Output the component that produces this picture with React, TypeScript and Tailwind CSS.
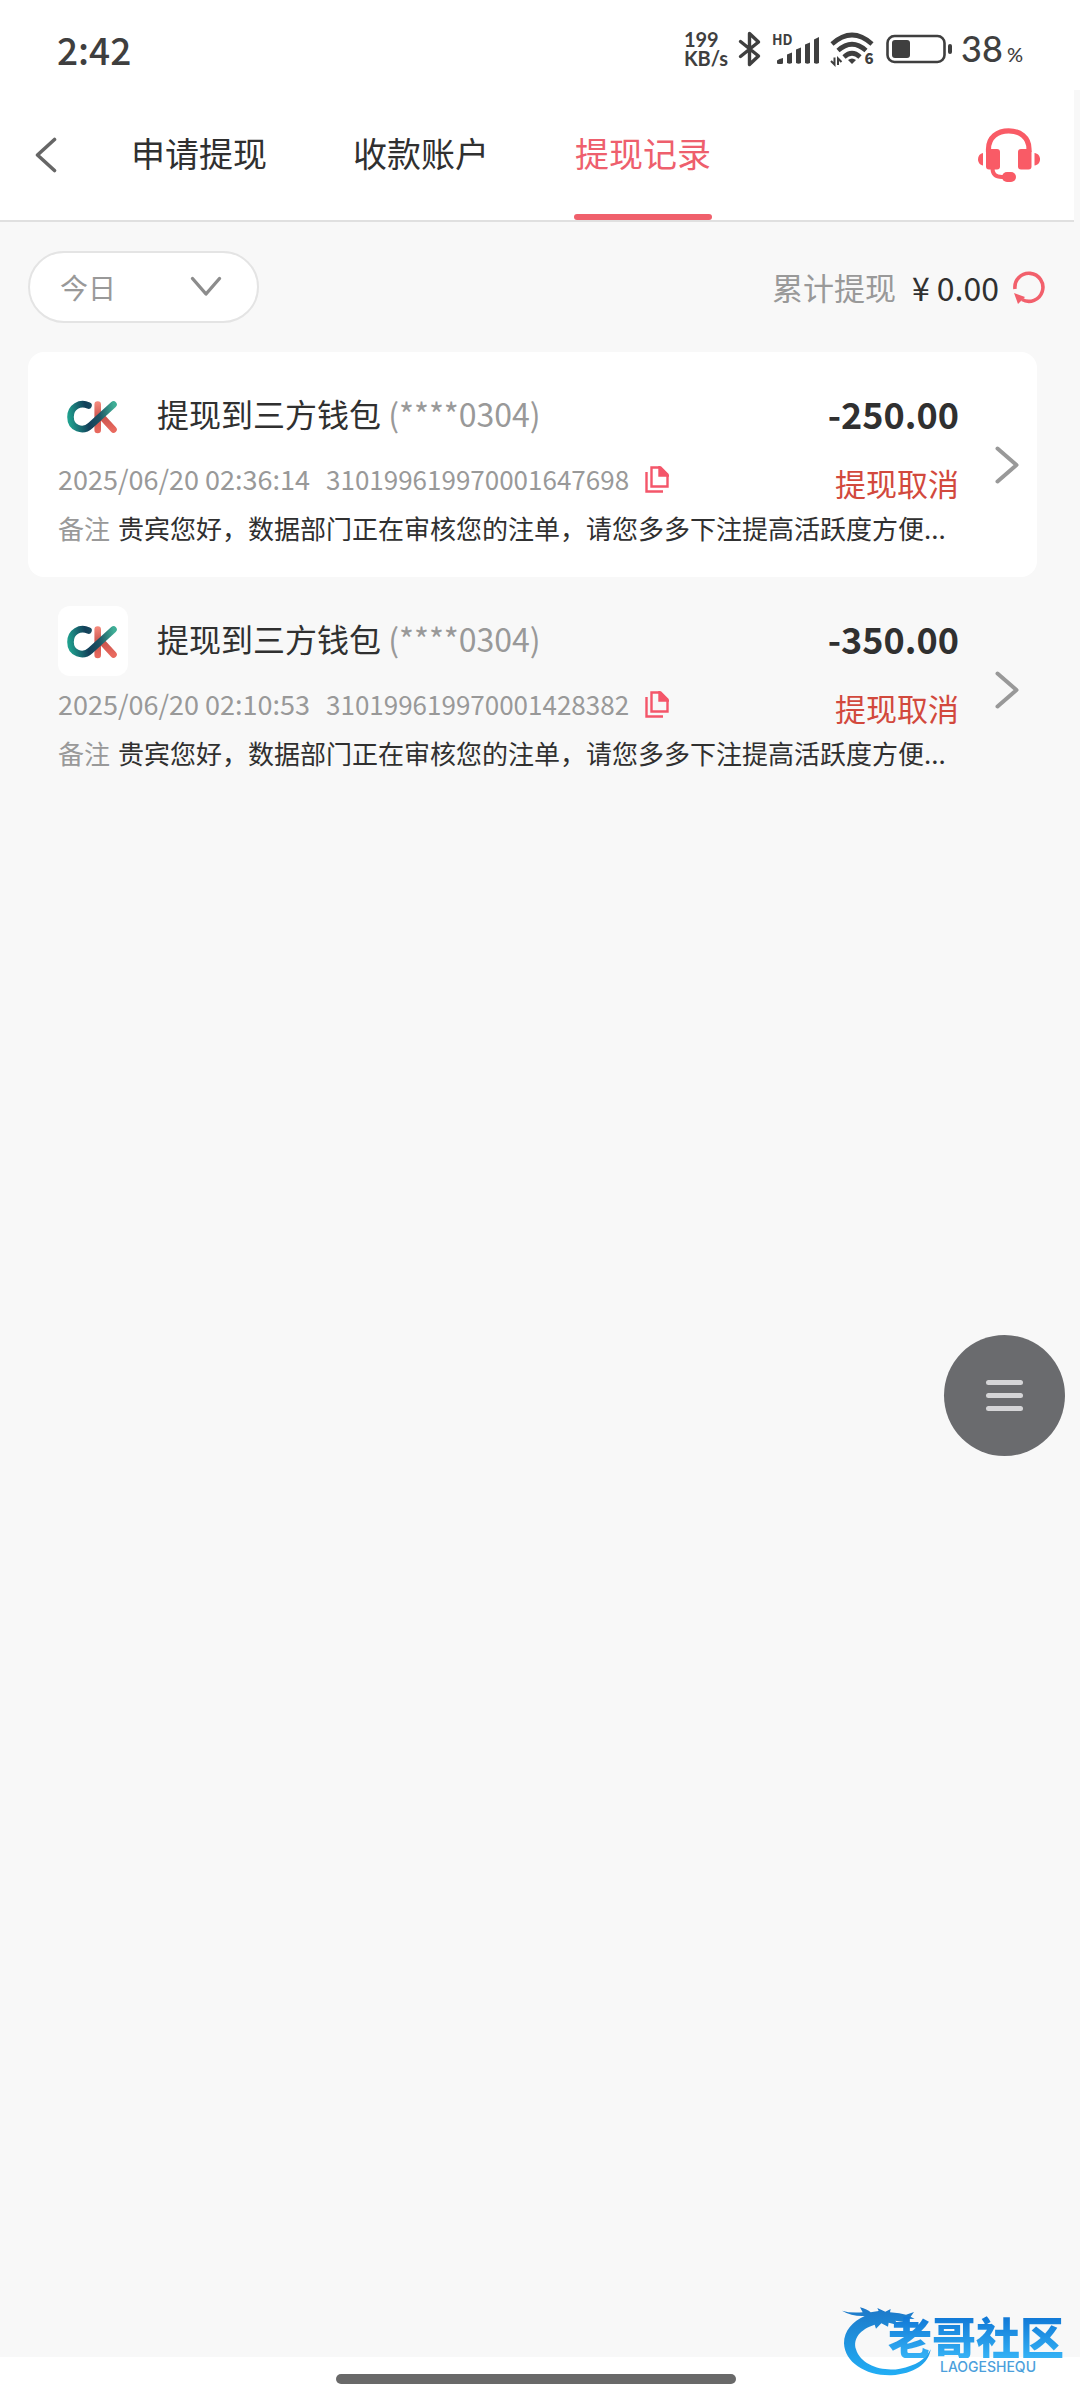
import { useState } from "react";
import clsx from "clsx";

const TABS = ["申请提现", "收款账户", "提现记录"];

const RECORDS = [
  {
    id: "310199619970001647698",
    title: "提现到三方钱包",
    account: "(****0304)",
    amount: "-250.00",
    time: "2025/06/20 02:36:14",
    status: "提现取消",
    note: "贵宾您好，数据部门正在审核您的注单，请您多多下注提高活跃度方便...",
  },
  {
    id: "310199619970001428382",
    title: "提现到三方钱包",
    account: "(****0304)",
    amount: "-350.00",
    time: "2025/06/20 02:10:53",
    status: "提现取消",
    note: "贵宾您好，数据部门正在审核您的注单，请您多多下注提高活跃度方便...",
  },
];

function StatusBar() {
  return (
    <div className="flex h-[90px] items-center justify-between bg-white px-[57px] pt-2 text-[#3f3f3f]">
      <span className="text-[37px] leading-10 font-medium">2:42</span>

      <div className="flex items-center">
        <div className="font-[Lato,sans-serif] text-xl leading-[19px] font-bold">
          <div>199</div>
          <div>KB/s</div>
        </div>

        {/* Bluetooth */}
        <svg className="ml-2.5" width="24" height="36" viewBox="0 0 24 36" fill="none" stroke="currentColor" strokeWidth="3.4" strokeLinejoin="round" strokeLinecap="round">
          <path d="M2.5 10.5 20.5 25 11.5 33.5V2.5L20.5 11 2.5 25.5" />
        </svg>

        {/* HD + signal */}
        <svg className="ml-2.5" width="48" height="44" viewBox="0 -6 48 44" fill="currentColor">
          <text x="0" y="12" fontSize="14" fontWeight="700">HD</text>
          <path d="M5 30.500V27.500Q7 25.500 11 25V30.500Q8 31.500 5 30.500Z" />
          <path d="M15 21.500 20 19.500V30Q17.500 31.500 15 30Z" />
          <path d="M24 16.500 29 14.500V30Q26.500 31.500 24 30Z" />
          <path d="M33 11.500 38 9.500V30Q35.500 31.500 33 30Z" />
          <path d="M42 6.500 47 4V30Q44.500 31.500 42 30Z" />
        </svg>

        {/* Wi-Fi 6 */}
        <svg className="ml-2.5" width="46" height="46" viewBox="0 -6 46 46" fill="none" stroke="currentColor">
          <path d="M2 12Q22 -6 42 12" strokeWidth="4.600" />
          <path d="M8 18.500Q22 6 36 18.500" strokeWidth="4.600" />
          <path d="M14 25Q22 17.500 30 25" strokeWidth="4.600" />
          <path d="M18 28Q22 25 26 28L22 32Z" fill="currentColor" stroke="none" />
          <path d="M1 29 4.500 32.500V25.500M8 33V26.500L11.500 30" strokeWidth="2" />
          <text x="34.500" y="32" fontSize="15" fontWeight="800" fill="currentColor" stroke="none">6</text>
        </svg>

        {/* Battery */}
        <svg className="ml-2.5" width="67" height="30" viewBox="0 0 67 30" fill="none">
          <rect x="1.500" y="2" width="57" height="26" rx="7" stroke="currentColor" strokeWidth="2.600" />
          <rect x="6" y="6" width="18" height="18" rx="3" fill="currentColor" />
          <rect x="62" y="10" width="4" height="10" rx="2" fill="currentColor" />
        </svg>

        <div className="ml-2 flex items-baseline gap-1 font-[Lato,sans-serif] text-4xl leading-10 font-medium">
          38
          <span className="text-xl leading-8">%</span>
        </div>
      </div>
    </div>
  );
}

function HeadsetIcon() {
  return (
    <svg width="62" height="54" viewBox="0 0 62 54" fill="#f95b66">
      <path d="M10.500 24V21C10.500 9.500 19.500 2.800 30.700 2.800S51 9.500 51 21V24" fill="none" stroke="#f95b66" strokeWidth="5.200" />
      <rect x="8" y="21" width="14" height="20.500" rx="3" />
      <rect x="40" y="21" width="13.500" height="20.500" rx="3" />
      <path d="M5 25V37.500C2 37 0 34.500 0 31.200S2 25.500 5 25Z" />
      <path d="M56.500 25V37.500C60 37 62 34.500 62 31.200S60 25.500 56.500 25Z" />
      <path d="M14.500 40C14.500 46 17 49 24 49H27" fill="none" stroke="#f95b66" strokeWidth="4" />
      <rect x="24" y="44" width="14" height="10" rx="5" />
    </svg>
  );
}

function RefreshIcon() {
  return (
    <svg width="32" height="33" viewBox="0 0 32 33">
      <path d="M2 18A14 14 0 1 1 9 28.500" fill="none" stroke="#f2606c" strokeWidth="3.600" />
      <path d="M1 22 12 26 5 33Z" fill="#f2606c" />
    </svg>
  );
}

function CopyIcon() {
  return (
    <svg width="24" height="27" viewBox="0 0 24 27" fill="none" stroke="#f4566a" strokeWidth="2.400">
      <path d="M1.500 6V25.500H18" />
      <path d="M6.500 1.500H15.500L22.500 8.500V20.500H6.500Z" />
      <path d="M14.500 1.500V9.500H22.500Z" fill="#f4566a" />
    </svg>
  );
}

function WalletLogo() {
  return (
    <svg className="size-[70px] shrink-0 rounded-xl bg-white" viewBox="0 0 70 70" fill="none" strokeLinecap="round" strokeWidth="6.600">
      <defs>
        <linearGradient id="ck-teal" gradientUnits="userSpaceOnUse" x1="10" y1="34" x2="56" y2="26">
          <stop offset="0" stopColor="#1fa08e" />
          <stop offset="0.400" stopColor="#12405a" />
          <stop offset="0.650" stopColor="#1d5263" />
          <stop offset="1" stopColor="#3fae96" />
        </linearGradient>
        <linearGradient id="ck-coral" gradientUnits="userSpaceOnUse" x1="40" y1="22" x2="44" y2="50">
          <stop offset="0" stopColor="#f3877a" />
          <stop offset="0.500" stopColor="#c9524c" />
          <stop offset="1" stopColor="#e8695e" />
        </linearGradient>
      </defs>
      <path d="M39.700 23.500V49M44 36 55.500 48.500" stroke="url(#ck-coral)" />
      <path d="M30.500 24.500C22 20.500 12.500 26 12.500 36C12.500 47.500 25 51.500 32.500 44.500L55.500 23.500" stroke="url(#ck-teal)" />
    </svg>
  );
}

type RecordItem = (typeof RECORDS)[number];

function RecordCard({ record, active }: { record: RecordItem; active: boolean }) {
  return (
    <li className={clsx("flex items-center gap-9 rounded-2xl pr-[18px] pl-[30px]", active && "bg-white")}>
      <div className="min-w-0 flex-1 pt-[29px] pb-[31px]">
        <div className="flex items-start leading-[64px]">
          <WalletLogo />
          <h2 className="ml-[29px] flex-1 text-[32px]">
            {record.title} <span className="text-[#999]">{record.account}</span>
          </h2>
          <span className="text-4xl leading-[64px] font-bold">{record.amount}</span>
        </div>

        <div className="mt-[13px] flex items-start">
          <div className="flex flex-1 items-center leading-[30px] text-[#999]">
            <span className="text-[27px]">{record.time}</span>
            <span className="ml-4 text-[26px]">{record.id}</span>
            <button type="button" aria-label="复制" className="ml-4">
              <CopyIcon />
            </button>
          </div>
          <span className="text-[31px] leading-[38px] text-[#d2493d]">{record.status}</span>
        </div>

        <p className="mt-2 overflow-hidden text-[26px] leading-9 whitespace-nowrap">
          <span className="mr-2 text-[#999]">备注</span>
          {record.note}
        </p>
      </div>

      <button type="button" aria-label="详情">
        <svg width="24" height="38" viewBox="0 0 24 38" fill="none" stroke="#999" strokeWidth="4" strokeLinecap="round" strokeLinejoin="round">
          <path d="M2.500 2.500 21.500 19 2.500 35.500" />
        </svg>
      </button>
    </li>
  );
}

function Watermark() {
  return (
    <div className="pointer-events-none absolute right-4 bottom-6 flex items-end">
      <svg width="92" height="72" viewBox="66 96 276 216">
        <defs>
          <linearGradient id="dragon" x1="0" y1="0" x2="0" y2="1">
            <stop offset="0" stopColor="#1d78c8" />
            <stop offset="1" stopColor="#22aef5" />
          </linearGradient>
        </defs>
        <path
          fill="url(#dragon)"
          d="M66 116Q90 124 128 121L120 106Q142 112 152 121L176 117 172 108 196 119 212 111 210 121 238 124 258 128 282 120 272 134 284 141 254 140 276 158 250 150 226 146 236 160 206 152 204 164 184 154 168 170 164 158C120 172 98 200 108 232C122 280 188 300 240 290C286 282 318 262 332 232C326 276 282 306 214 310C138 312 74 272 72 214C72 176 98 148 134 132Q96 134 66 116Z"
        />
      </svg>
      <div className="-ml-[46px] flex flex-col items-center">
        <span className="bg-linear-to-b from-[#0f74d4] to-[#35b2f5] bg-clip-text text-[44px] leading-[44px] font-black text-transparent">
          老哥社区
        </span>
        <span className="ml-6 font-[Inter,sans-serif] text-sm leading-[18px] font-medium text-[#4c9fdc]">LAOGESHEQU</span>
      </div>
    </div>
  );
}

export default function App() {
  const [tab, setTab] = useState(2);

  return (
    <div className="relative flex min-h-screen flex-col bg-[#f8f8f8] font-['Noto_Sans_CJK_SC',sans-serif] text-[#303030]">
      <StatusBar />

      <header className="mr-1.5 flex h-[132px] items-stretch border-b-2 border-[#e0e0e0] bg-white pr-[34px] pl-[35px]">
        <button type="button" aria-label="返回">
          <svg width="22" height="36" viewBox="0 0 22 36" fill="none" stroke="#666" strokeWidth="3.600" strokeLinecap="round" strokeLinejoin="round">
            <path d="M19.500 2.500 2.500 18 19.500 33.500" />
          </svg>
        </button>

        <nav className="ml-[73px] flex flex-1 gap-[84px]">
          {TABS.map((label, i) => (
            <button
              key={label}
              type="button"
              onClick={() => setTab(i)}
              className={clsx("flex flex-col text-[34px] leading-[126px]", tab === i && "text-[#ee5f6d]")}
            >
              <span className="h-[124px] px-px">{label}</span>
              <span className={clsx("h-1.5 w-full rounded-full", tab === i && "bg-[#f0606c]")} />
            </button>
          ))}
        </nav>

        <button type="button" aria-label="客服">
          <HeadsetIcon />
        </button>
      </header>

      <main className="flex-1 pt-[29px] pl-7">
        <div className="flex items-center justify-between pr-[35px]">
          <div className="relative">
            <select
              aria-label="日期"
              className="h-[72px] w-[231px] appearance-none rounded-full border-2 border-[#e4e4e4] bg-white pl-[30px] text-[28px] text-[#999]"
            >
              <option>今日</option>
            </select>
            <svg className="pointer-events-none absolute top-[25px] right-[37px]" width="32" height="22" viewBox="0 0 32 22" fill="none" stroke="#8c8c8c" strokeWidth="3.400" strokeLinecap="round" strokeLinejoin="round">
              <path d="M2.500 2.500 16 18 29.500 2.500" />
            </svg>
          </div>

          <div className="flex items-center leading-10">
            <span className="text-[31px] text-[#999]">累计提现</span>
            <span className="ml-4 text-[32px]">¥ 0.00</span>
            <button type="button" aria-label="刷新" className="ml-3.5">
              <RefreshIcon />
            </button>
          </div>
        </div>

        <ul className="mt-[29px] mr-[43px]">
          {RECORDS.map((record, i) => (
            <RecordCard key={record.id} record={record} active={i === 0} />
          ))}
        </ul>
      </main>

      <footer className="flex h-[43px] justify-center bg-white pt-[17px] pr-2">
        <div className="h-2.5 w-[400px] rounded-full bg-[#696969]" />
      </footer>

      <button
        type="button"
        aria-label="菜单"
        className="absolute top-[1335px] right-[15px] flex size-[121px] flex-col items-center justify-center gap-2 rounded-full bg-[#6a6b6e]"
      >
        <span className="h-[5px] w-[37px] rounded-full bg-[#d5d5d7]" />
        <span className="h-[5px] w-[37px] rounded-full bg-[#d5d5d7]" />
        <span className="h-[5px] w-[37px] rounded-full bg-[#d5d5d7]" />
      </button>

      <Watermark />
    </div>
  );
}
